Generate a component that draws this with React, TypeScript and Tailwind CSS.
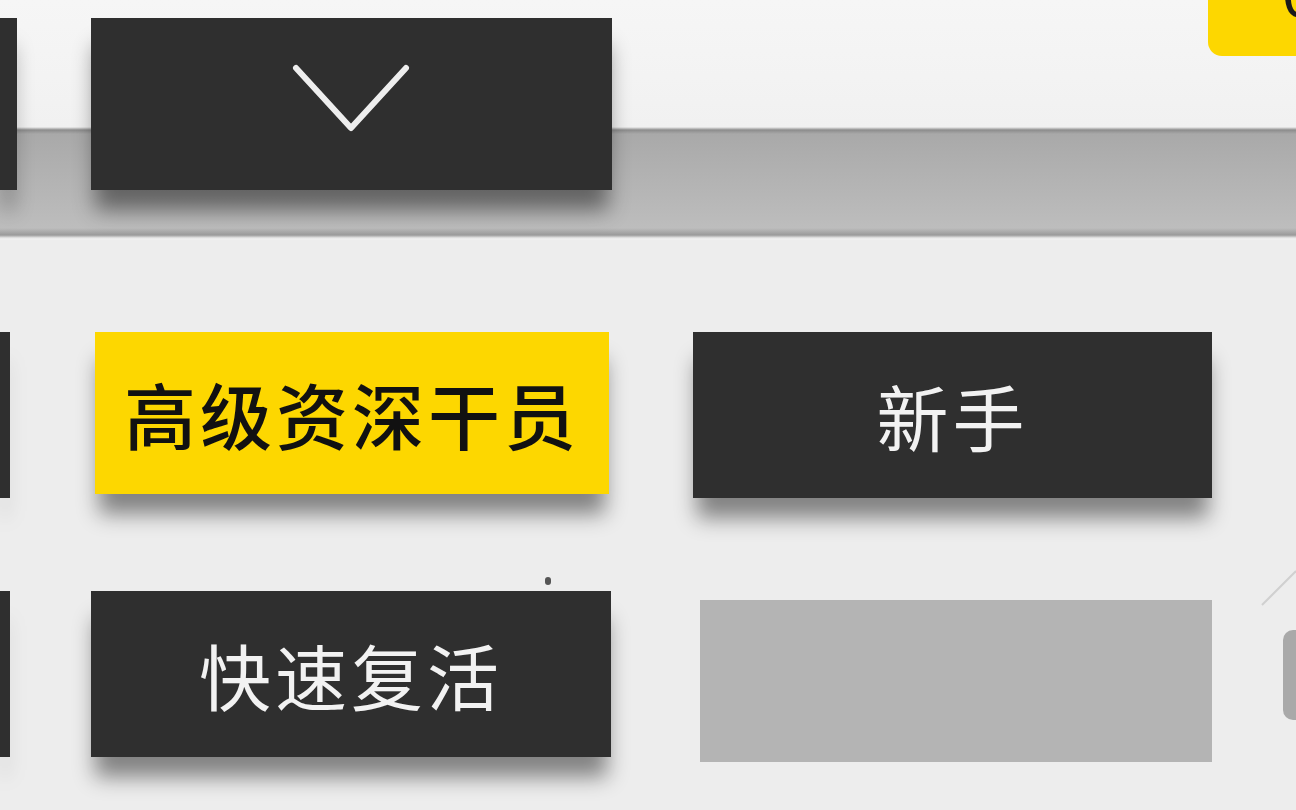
const font = { fontFamily: '"Noto Sans CJK SC", "Noto Sans", sans-serif' };

const Tag = ({ label, yellow }: { label: string; yellow?: boolean }) => (
  <span
    className={`text-[72px] leading-none tracking-[4px] ${yellow ? "font-medium text-[#111]" : "text-[#f2f2f2]"}`}
    style={font}
  >
    {label}
  </span>
);

const App = () => {
  return (
    <div className="w-[1296px] h-[810px] overflow-hidden flex flex-col bg-[#ededed]" style={font}>
      {/* top strip with the grey band */}
      <div className="h-[240px] flex items-start bg-[linear-gradient(to_bottom,#f6f6f6_0px,#f1f1f1_127px,#8c8c8c_130px,#a9a9a9_134px,#b3b3b3_180px,#bdbdbd_228px,#9a9a9a_235px,#e9e9e9_238px,#f2f2f2_240px)]">
        <div className="w-[17px] h-[172px] mt-[18px] bg-[#2f2f2f] shadow-[0_24px_20px_-4px_rgba(0,0,0,0.4)]" />
        <div className="ml-[74px] w-[521px] h-[172px] mt-[18px] bg-[#2f2f2f] flex items-start justify-center shadow-[0_24px_20px_-4px_rgba(0,0,0,0.45)]">
          <svg width="130" height="80" viewBox="0 0 130 80" className="mt-[44px]">
            <polyline points="9,6 64,66 119,6" fill="none" stroke="#eeeeee" strokeWidth="6" strokeLinecap="round" strokeLinejoin="round" />
          </svg>
        </div>
        <div className="ml-auto w-[88px] h-[56px] bg-[#fdd700] rounded-bl-[14px] overflow-hidden flex justify-end">
          <span className="text-[64px] leading-none text-[#1a1a1a] -mt-[37px] mr-[-22px]" style={{ fontFamily: '"Liberation Sans", sans-serif' }}>
            0
          </span>
        </div>
      </div>

      {/* row 1 */}
      <div className="flex items-start mt-[92px]">
        <div className="w-[10px] h-[166px] bg-[#2f2f2f] shadow-[0_24px_20px_-4px_rgba(0,0,0,0.4)]" />
        <div className="ml-[85px] w-[514px] h-[162px] bg-[#fdd700] flex items-center justify-center shadow-[0_24px_20px_-4px_rgba(0,0,0,0.45)]">
          <Tag label="高级资深干员" yellow />
        </div>
        <div className="ml-[84px] w-[519px] h-[166px] bg-[#2f2f2f] flex items-center justify-center shadow-[0_24px_20px_-4px_rgba(0,0,0,0.45)]">
          <Tag label="新手" />
        </div>
      </div>

      {/* row 2 */}
      <div className="flex items-start mt-[93px]">
        <div className="w-[10px] h-[166px] bg-[#2f2f2f] shadow-[0_24px_20px_-4px_rgba(0,0,0,0.4)]" />
        <div className="relative ml-[81px] w-[520px] h-[166px] bg-[#2f2f2f] flex items-center justify-center shadow-[0_24px_20px_-4px_rgba(0,0,0,0.45)]">
          <span className="absolute -top-[14px] left-[454px] w-[6px] h-[8px] rounded-full bg-[#555]" />
          <Tag label="快速复活" />
        </div>
        <div className="ml-[89px] w-[512px] h-[162px] mt-[9px] bg-[#b4b4b4]" />
        <div className="ml-auto flex flex-col items-end">
          <svg width="40" height="40" viewBox="0 0 40 40" className="-mt-[22px]">
            <line x1="6" y1="36" x2="40" y2="2" stroke="#d0d0d0" strokeWidth="2" />
          </svg>
          <div className="mt-[21px] w-[13px] h-[90px] rounded-l-[10px] bg-[#a9a9a9]" />
        </div>
      </div>
    </div>
  );
};

export default App;
